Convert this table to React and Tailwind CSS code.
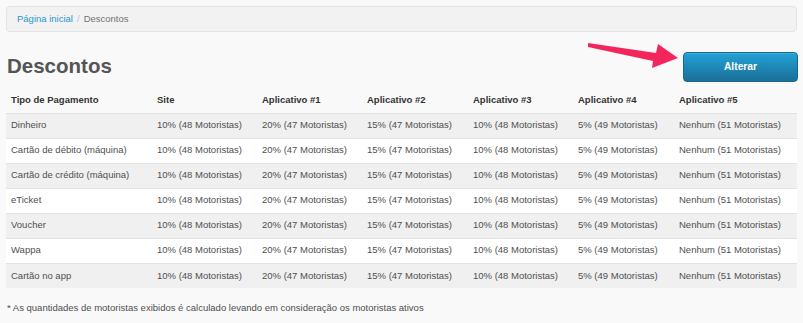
import React from "react";

const rows = [
  "Dinheiro",
  "Cartão de débito (máquina)",
  "Cartão de crédito (máquina)",
  "eTicket",
  "Voucher",
  "Wappa",
  "Cartão no app",
];
const vals = [
  "10% (48 Motoristas)",
  "20% (47 Motoristas)",
  "15% (47 Motoristas)",
  "10% (48 Motoristas)",
  "5% (49 Motoristas)",
  "Nenhum (51 Motoristas)",
];
const heads = ["Tipo de Pagamento", "Site", "Aplicativo #1", "Aplicativo #2", "Aplicativo #3", "Aplicativo #4", "Aplicativo #5"];
const widths = ["w-[146px]", "w-[105px]", "w-[105px]", "w-[106px]", "w-[105px]", "w-[101px]", "w-[123px]"];

export default function App() {
  return (
    <div className="w-[803px] h-[323px] bg-[#f9f9f9] px-[6px] pt-[6px] text-[#4f4f4f] font-['Liberation_Sans',Arial,sans-serif] relative overflow-hidden">
      <div className="h-[26px] rounded-[4px] border border-[#e3e3e3] bg-[#f2f2f2] flex items-center px-[10px] text-[9.5px]">
        <span className="text-[#2a96cc]">Página inicial</span>
        <span className="text-[#c4c4c4] mx-[4px]">/</span>
        <span className="text-[#737373]">Descontos</span>
      </div>
      <div className="flex items-center justify-between mt-[20px] h-[30px] mr-[-1px]">
        <h1 className="text-[20.5px] font-bold text-[#555] pl-[1px] leading-none mt-[-2px]">Descontos</h1>
        <button className="w-[115px] h-[30px] rounded-[4px] border border-[#17698f] bg-gradient-to-b from-[#22a2d6] to-[#1a6f98] text-white font-bold text-[10.25px] shadow-[inset_0_1px_0_rgba(255,255,255,0.15)]">
          Alterar
        </button>
      </div>
      <table className="mt-[6px] table-fixed border-collapse w-[791px] text-[9.5px]">
        <thead>
          <tr className="h-[25px]">
            {heads.map((h, i) => (
              <th key={h} className={`${widths[i]} text-left font-bold text-[#333] px-[5px] align-middle`}>{h}</th>
            ))}
          </tr>
        </thead>
        <tbody>
          {rows.map((r, ri) => (
            <tr key={r} className={`h-[25px] border-t border-[#e2e2e2] ${ri % 2 === 0 ? "bg-[#f0f0f0]" : "bg-white"}`}>
              <td className="px-[5px] whitespace-nowrap">{r}</td>
              {vals.map((v, vi) => (
                <td key={vi} className="px-[5px] whitespace-nowrap">{v}</td>
              ))}
            </tr>
          ))}
        </tbody>
      </table>
      <p className="mt-[13px] ml-[1px] text-[9.5px] text-[#4f4f4f]">* As quantidades de motoristas exibidos é calculado levando em consideração os motoristas ativos</p>
      <svg className="absolute left-0 top-0 pointer-events-none" width="803" height="323">
        <polygon points="588,43 656,53 658,44 678,58 652,68 653,61 588,47" fill="#f2265c" />
      </svg>
    </div>
  );
}
